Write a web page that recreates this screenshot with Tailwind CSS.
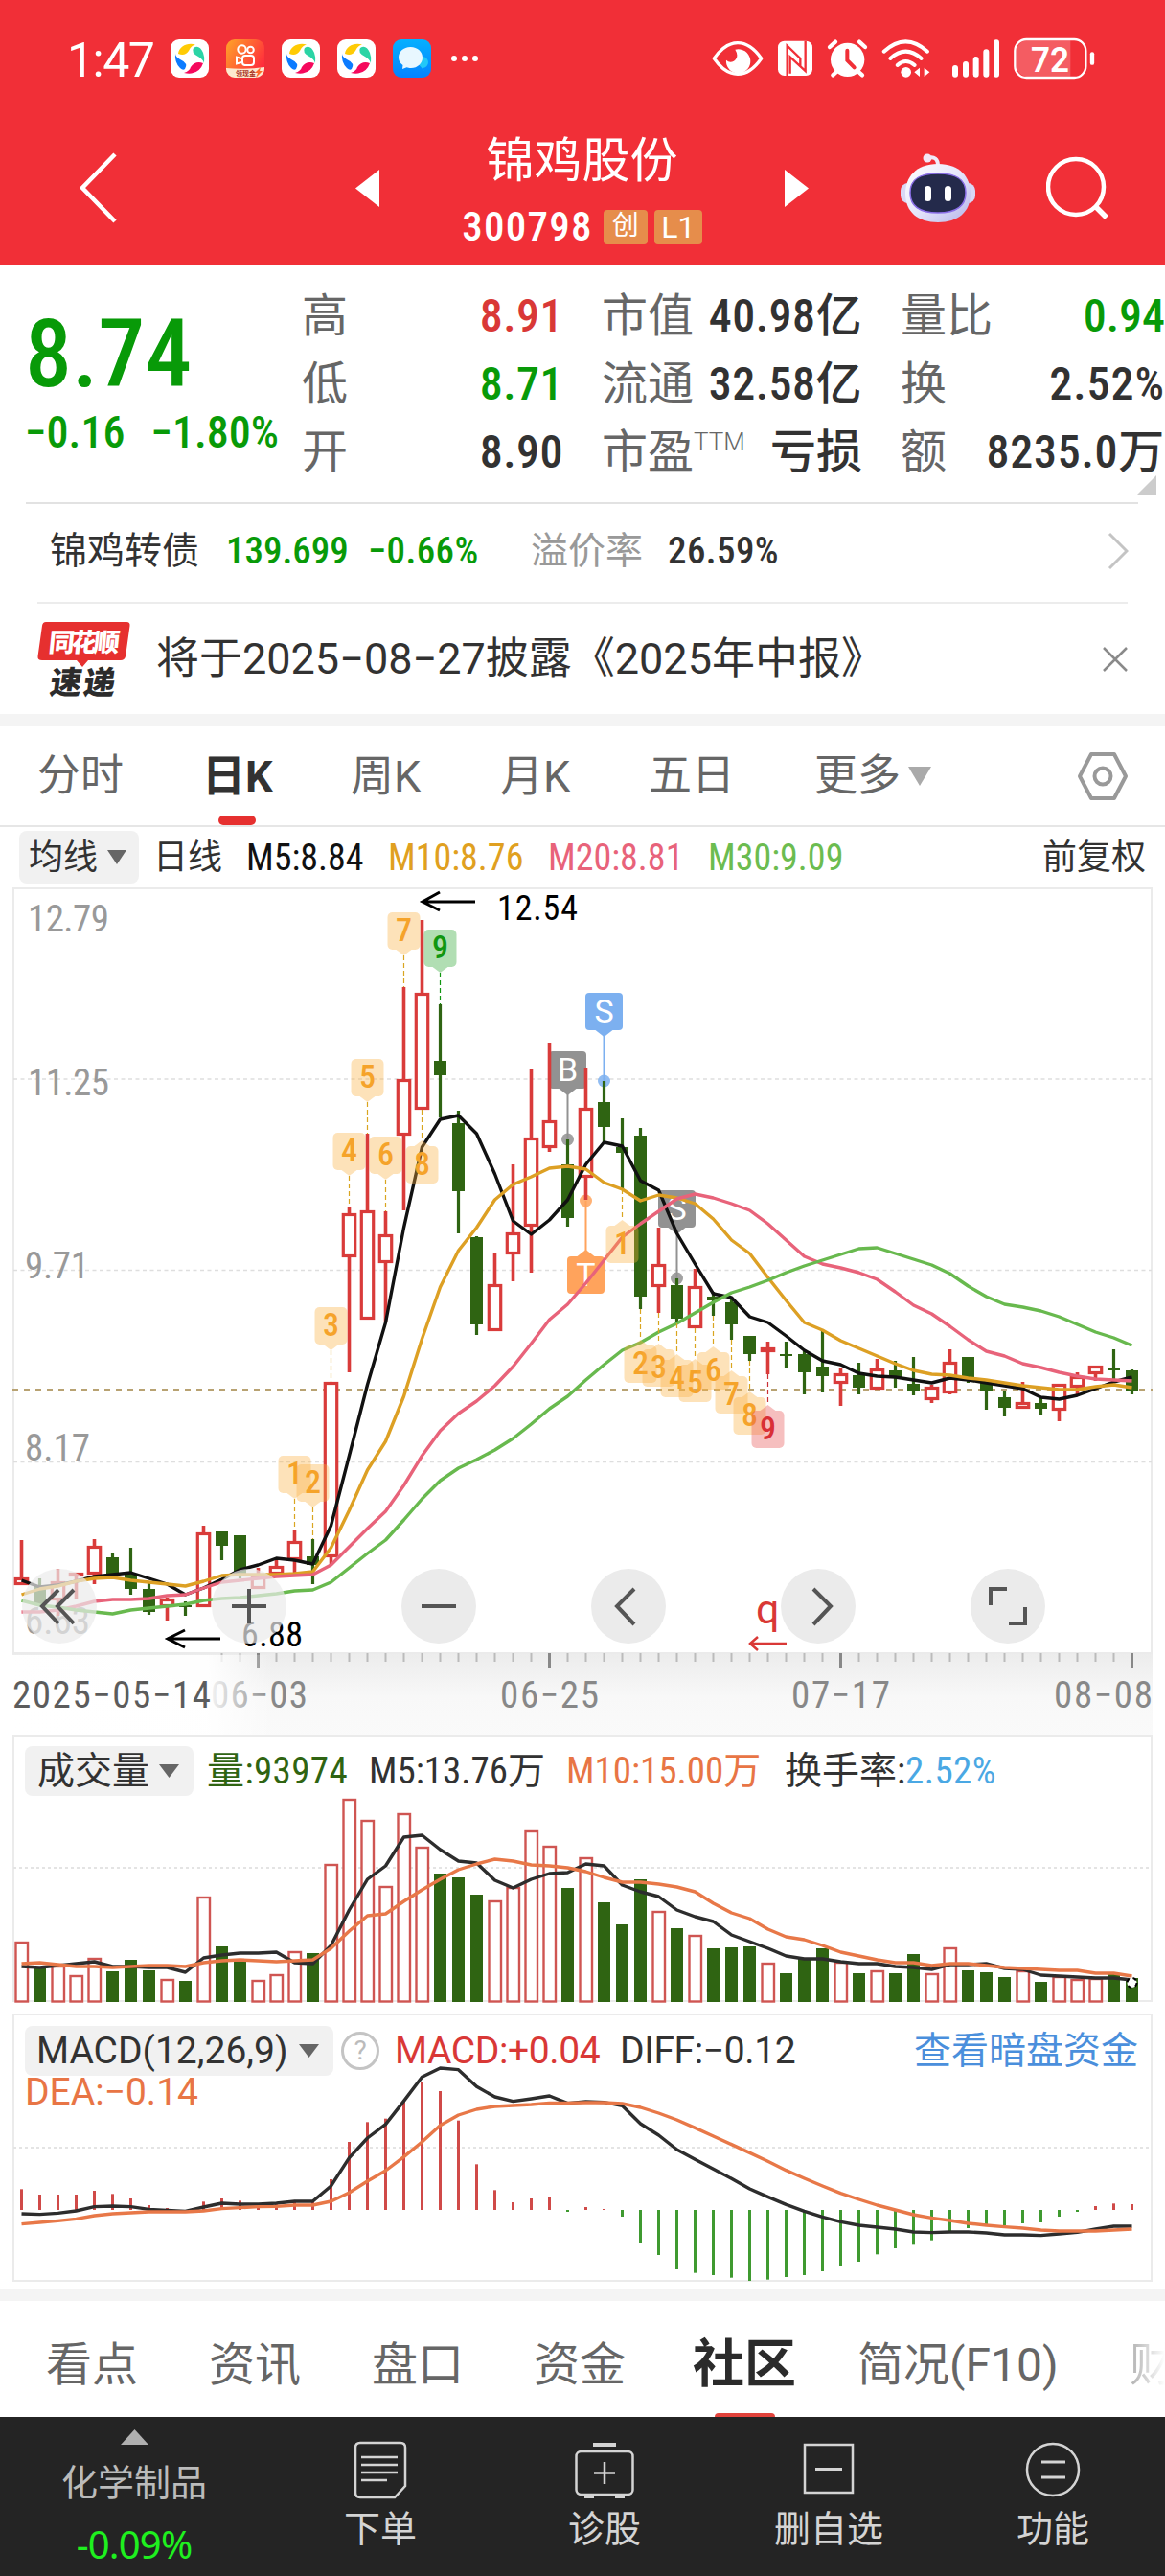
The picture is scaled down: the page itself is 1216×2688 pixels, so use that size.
<!DOCTYPE html>
<html lang="zh">
<head>
    <meta charset="UTF-8">
    <meta name="viewport" content="width=device-width, initial-scale=1.0">
    <title>锦鸡股份 300798</title>
    <script src="https://cdn.jsdelivr.net/npm/@tailwindcss/browser@4"></script>
</head>
<body class="bg-white w-[1216px] overflow-x-hidden font-['Roboto_Condensed','Noto_Sans_CJK_SC',sans-serif] text-[#323232]">

    <!-- 顶部状态栏 + 标题 -->
    <header class="h-[276px] bg-[#f12f37] text-white">
        <div class="h-[122px] flex items-center justify-between">
            <div class="flex items-center gap-[18px] pl-[70px]">
                <span class="w-[90px] pt-1 text-[50px] leading-none font-['Roboto'] tracking-[-0.03em]">1:47</span>
                <svg class="w-10 h-10" viewBox="0 0 40 40"><use href="#app-swirl"/></svg>
                <svg class="w-10 h-10" viewBox="0 0 40 40">
                    <defs><linearGradient id="ks" x1="0" y1="0" x2="1" y2=".6"><stop offset="0" stop-color="#ffa528"/><stop offset="1" stop-color="#ff2d3c"/></linearGradient></defs>
                    <rect width="40" height="40" rx="9" fill="url(#ks)"/>
                    <g fill="none" stroke="#fff" stroke-width="2">
                        <circle cx="16.500" cy="10.500" r="4.200"/><circle cx="25.500" cy="11" r="3.300"/>
                        <rect x="17" y="17" width="12" height="10" rx="3"/><path d="M16 20l-5-1.500v7l5-1.500"/>
                    </g>
                    <path d="M0 30q20 2 40-1v2a9 9 0 0 1-9 9H9a9 9 0 0 1-9-9z" fill="#fde9cf"/>
                    <text x="10" y="37.500" font-size="7" font-weight="700" fill="#a8321e">领现金</text>
                    <path d="M36 29l-6 6h3l-2 5 7-7h-3z" fill="#ff6a28"/>
                </svg>
                <svg class="w-10 h-10" viewBox="0 0 40 40"><use href="#app-swirl"/></svg>
                <svg class="w-10 h-10" viewBox="0 0 40 40"><use href="#app-swirl"/></svg>
                <svg class="w-10 h-10" viewBox="0 0 40 40">
                    <defs>
                        <linearGradient id="msg" x1="0" y1="0" x2="0" y2="1"><stop offset="0" stop-color="#05b0ff"/><stop offset="1" stop-color="#0482ff"/></linearGradient>
                        <g id="app-swirl">
                            <rect width="40" height="40" rx="9" fill="#fff"/>
                            <path d="M8 15C9 7 18 3 26 5.500C23 6 21 8 19 12Q15 18 8 15z" fill="#ffcb05"/>
                            <path d="M24 9Q30 5 34 14Q36 19 35 25Q34 21 29 18Q21 14 24 9z" fill="#2bd4a5"/>
                            <path d="M34 25Q31 34 22 35.500Q18 36 14 35Q20 33 21 29Q26 22 34 25z" fill="#f5095c"/>
                            <path d="M5 15Q5 18 10 21Q19 25 15 31Q13 33 10 30Q4 24 5 15z" fill="#0b7bff"/>
                        </g>
                    </defs>
                    <rect width="40" height="40" rx="9" fill="url(#msg)"/>
                    <path d="M25 24a6 6 0 1 1 6 6l2 3z" fill="#22c8f8"/>
                    <path d="M18.500 8C26 8 31 13 31 19s-5 11-12 11c-2 0-3-.3-4.500-.8L10 31l.5-4C7.500 25 6 22 6 19 6 13 11 8 18.500 8z" fill="#e8f7ff"/>
                </svg>
                <div class="flex gap-[5px] pl-[3px]">
                    <i class="size-1.5 rounded-full bg-white"></i>
                    <i class="size-1.5 rounded-full bg-white"></i>
                    <i class="size-1.5 rounded-full bg-white"></i>
                </div>
            </div>
            <svg class="w-[486px] h-[70px] mt-2" viewBox="0 0 1458 210" fill="none" stroke="#fff" stroke-linecap="round">
                <!-- 护眼 -->
                <path d="M46 93Q80 44 120 44T194 93Q160 142 120 142T46 93z" stroke-width="10" stroke-linejoin="round"/>
                <path d="M112 65A38 38 0 1 1 84 98A20 20 0 0 0 108 101Q126 88 112 65z" fill="#fff" stroke="none"/>
                <!-- NFC -->
                <rect x="246" y="38" width="108" height="109" rx="20" fill="#fff" stroke="none"/>
                <path d="M275 147V53L316 93V118M332 38V132L284 88V140" stroke="#f12f37" stroke-width="7" stroke-linecap="butt"/>
                <!-- 闹钟 -->
                <circle cx="464" cy="97" r="53" fill="#fff" stroke="none"/>
                <path d="M408 57l18-16M519 57l-18-16M418 145l18-16M510 145l-18-16" stroke-width="13"/>
                <path d="M463 68V99L485 121" stroke="#f12f37" stroke-width="12"/>
                <!-- WiFi -->
                <path d="M578 71Q646 9 714 71M598 93Q646 49 695 93M620 114Q646 90 674 114" stroke-width="12"/>
                <circle cx="647" cy="136" r="16" fill="#fff" stroke="none"/>
                <path d="M673 136l17-14v28zM721 136l-17-14v28z" fill="#fff" stroke="none"/>
                <!-- 信号 -->
                <path d="M801 123V143M834 111V143M866 96V143M898 73V143M930 43V143" stroke-width="18"/>
                <!-- 电量 -->
                <path d="M1026 37H1162V149H1026a34 34 0 0 1-34-34V71a34 34 0 0 1 34-34z" fill="#fff" fill-opacity=".22" stroke="none"/>
                <rect x="988" y="33" width="222" height="120" rx="36" stroke-width="7"/>
                <path d="M1230 79V107" stroke-width="13"/>
                <text x="1038" y="134" textLength="120" lengthAdjust="spacingAndGlyphs" font-family="Roboto" font-size="110" font-weight="600" fill="#fff" stroke="none">72</text>
            </svg>
        </div>

        <div class="h-[148px] flex items-center">
            <svg class="ml-[82px] w-10 h-[74px]" viewBox="0 0 40 74" fill="none" stroke="#fff" stroke-width="4.500"><path d="M38 2L4 37L38 72"/></svg>
            <svg class="ml-[249px] w-[25px] h-[39px]" viewBox="0 0 25 39"><path d="M25 0V39L0 19.500z" fill="#fff"/></svg>
            <div class="w-[423px] pt-[9px] flex flex-col items-center">
                <h1 class="h-[70px] leading-[74px] text-[50px]">锦鸡股份</h1>
                <div class="h-[70px] pt-0.5 flex items-center gap-[7px]">
                    <span class="text-[43px] leading-none font-medium tracking-[0.03em] pr-1">300798</span>
                    <span class="w-[46px] h-9 rounded bg-[#e68d4b] text-[28px] leading-[34px] text-center">创</span>
                    <span class="w-[50px] h-9 rounded bg-[#e68d4b] text-[32px] leading-9 text-center font-['Roboto']">L1</span>
                </div>
            </div>
            <svg class="w-[25px] h-[39px]" viewBox="0 0 25 39"><path d="M0 0V39L25 19.500z" fill="#fff"/></svg>
            <!-- 机器人 -->
            <svg class="ml-24 w-[78px] h-[74px]" viewBox="0 0 78 74">
                <defs><linearGradient id="bot" x1="0" y1="0" x2="1" y2="1"><stop offset="0" stop-color="#fff"/><stop offset=".5" stop-color="#e6e6fb"/><stop offset="1" stop-color="#b5b4e8"/></linearGradient></defs>
                <path d="M28 6Q39 3 39 14" fill="none" stroke="#efeafa" stroke-width="4"/>
                <circle cx="28" cy="6" r="4.500" fill="#f3e6f6"/>
                <rect x="0" y="32" width="78" height="21" rx="8" fill="#d9d8f6"/>
                <path d="M39 12C62 12 73 26 73 43C73 62 60 73 39 73S5 62 5 43C5 26 16 12 39 12z" fill="url(#bot)"/>
                <path d="M39 22C60 22 68 29 68 42S60 63 39 63S10 55 10 42S18 22 39 22z" fill="#242a4b" stroke="#8b6fe8" stroke-width="1.500"/>
                <rect x="25" y="35" width="7" height="16" rx="3.500" fill="#fff"/><rect x="46" y="35" width="7" height="16" rx="3.500" fill="#fff"/>
            </svg>
            <svg class="ml-[74px] w-[66px] h-[66px]" viewBox="0 0 66 66" fill="none" stroke="#fff"><circle cx="31" cy="32" r="29" stroke-width="4.500"/><path d="M51 52L63 64" stroke-width="5.500"/></svg>
        </div>
    </header>

    <!-- 行情 -->
    <section class="h-[248px] flex">
        <div class="w-[315px] pl-[26px] text-[#089a08]">
            <div class="mt-[41px] h-[104px] leading-[106px] text-[98px] font-medium">8.74</div>
            <div class="h-[60px] leading-[60px] text-[46px] flex gap-[27px] font-medium"><span>−0.16</span><span>−1.80%</span></div>
        </div>
        <dl class="w-[273px] pt-[18px] text-[48px] leading-[71px]">
            <div class="h-[71px] flex justify-between"><dt class="text-[#666]">高</dt><dd class="font-medium tracking-[0.01em] text-[#d93836]">8.91</dd></div>
            <div class="h-[71px] flex justify-between"><dt class="text-[#666]">低</dt><dd class="font-medium tracking-[0.01em] text-[#089a08]">8.71</dd></div>
            <div class="h-[71px] flex justify-between"><dt class="text-[#666]">开</dt><dd class="font-medium tracking-[0.01em]">8.90</dd></div>
        </dl>
        <dl class="ml-10 w-[272px] pt-[18px] text-[48px] leading-[71px]">
            <div class="h-[71px] flex justify-between"><dt class="text-[#666]">市值</dt><dd class="font-medium tracking-[0.01em]">40.98亿</dd></div>
            <div class="h-[71px] flex justify-between"><dt class="text-[#666]">流通</dt><dd class="font-medium tracking-[0.01em]">32.58亿</dd></div>
            <div class="h-[71px] flex justify-between"><dt class="text-[#666] flex">市盈<small class="text-[26px] leading-[50px] font-['Roboto'] font-light">TTM</small></dt><dd class="font-medium">亏损</dd></div>
        </dl>
        <dl class="ml-10 w-[276px] pt-[18px] text-[48px] leading-[71px]">
            <div class="h-[71px] flex justify-between"><dt class="text-[#666]">量比</dt><dd class="font-medium text-[#089a08]">0.94</dd></div>
            <div class="h-[71px] flex justify-between"><dt class="text-[#666]">换</dt><dd class="font-medium tracking-[0.02em]">2.52%</dd></div>
            <div class="h-[71px] flex justify-between"><dt class="text-[#666]">额</dt><dd class="font-medium tracking-[0.015em]">8235.0万</dd></div>
            <svg class="ml-auto mr-[9px] -mt-[11px] w-5 h-5" viewBox="0 0 20 20"><path d="M20 0V20H0z" fill="#ccc"/></svg>
        </dl>
    </section>

    <!-- 可转债 -->
    <div class="ml-[27px] mr-[28px] border-t-2 border-[#e2e2e2] h-[104px] flex items-center pl-[25px] pr-[10px] pb-1 text-[39px] whitespace-nowrap">
        <span class="w-[184px]">锦鸡转债</span>
        <span class="w-[148px] text-[#089a08] font-medium">139.699</span>
        <span class="w-[170px] text-[#089a08] font-medium tracking-[0.01em]">−0.66%</span>
        <span class="w-[143px] text-[#999]">溢价率</span>
        <span class="font-medium tracking-[0.01em]">26.59%</span>
        <svg class="ml-auto w-[22px] h-10" viewBox="0 0 22 40" fill="none" stroke="#c4c4c4" stroke-width="3"><path d="M2 2L20 20L2 38"/></svg>
    </div>

    <!-- 速递 -->
    <div class="mx-[39px] border-t-2 border-[#ececec] h-[117px] flex items-center">
        <div class="w-[124px]">
            <svg class="w-[98px] h-[78px] overflow-visible" viewBox="0 0 98 78" font-weight="900" font-family="'Noto Sans CJK SC',sans-serif">
                <path d="M9 0H93q4 0 3.500 4L92 36q-1 4-5 4H53l-6 7-6-7H5q-5 0-4.500-4L5 4q.5-4 4-4z" fill="#e6302f"/>
                <text transform="translate(11 31) skewX(-6)" font-size="27" textLength="74" fill="#fff">同花顺</text>
                <text transform="translate(12 75) skewX(-8)" font-size="33" textLength="68" fill="#2c2c2c">速递</text>
            </svg>
        </div>
        <p class="text-[45px] font-['Roboto','Noto_Sans_CJK_SC'] whitespace-nowrap">将于2025−08−27披露《2025年中报》</p>
        <svg class="ml-auto w-[26px] h-[26px]" viewBox="0 0 26 26" stroke="#8a8a8a" stroke-width="2.500"><path d="M1 1L25 25M25 1L1 25"/></svg>
    </div>
    <div class="h-[13px] bg-[#f4f4f4]"></div>

    <!-- 周期切换 -->
    <nav class="h-[105px] border-b-2 border-[#e6e6e6] flex items-center text-[45px] text-[#666] font-['Roboto','Noto_Sans_CJK_SC'] whitespace-nowrap">
        <span class="ml-[39px] w-[172px]">分时</span>
        <span class="relative w-[155px] pt-0.5 font-bold text-[#323232]">日K<i class="absolute left-[17px] top-[76px] w-[39px] h-[10px] rounded-full bg-[#e6302f]"></i></span>
        <span class="w-[156px] pt-0.5">周K</span>
        <span class="w-[155px] pt-0.5">月K</span>
        <span class="w-[173px]">五日</span>
        <span>更多</span>
        <svg class="ml-2 w-6 h-5" viewBox="0 0 24 20"><path d="M0 0H24L12 20z" fill="#aaa"/></svg>
        <svg class="ml-auto mr-[38px] w-[54px] h-[52px]" viewBox="0 0 54 52" fill="none" stroke="#999" stroke-width="4" stroke-linejoin="round"><path d="M15 3H39L51 26L39 49H15L3 26z"/><circle cx="27" cy="26" r="8.500"/></svg>
    </nav>

    <!-- 均线 -->
    <div class="h-[63px] flex items-center text-[38px] whitespace-nowrap">
        <div class="ml-5 w-[125px] h-[55px] rounded-lg bg-[#f1f1f1] flex items-center pl-[10px] text-[36px]">均线<svg class="ml-[10px] w-5 h-[15px]" viewBox="0 0 20 15"><path d="M0 0H20L10 15z" fill="#666"/></svg></div>
        <span class="ml-[15px] w-[97px] text-[36px]">日线</span>
        <span class="w-[148px] pt-0.5 text-[#111]">M5:8.84</span>
        <span class="w-[167px] pt-0.5 text-[#e0a020]">M10:8.76</span>
        <span class="w-[167px] pt-0.5 text-[#e8637a]">M20:8.81</span>
        <span class="pt-0.5 text-[#6cbc50]">M30:9.09</span>
        <span class="ml-auto mr-5 text-[36px]">前复权</span>
    </div>

    <!-- K线图 -->
    <div class="relative h-[884px]">
        <svg id="kline" class="block w-full h-full" viewBox="0 926 1216 884"></svg>
        <div class="absolute left-[23px] top-[711px] flex gap-[120px]">
            <button class="size-[78px] rounded-full bg-[#ebebeb]/70"><svg viewBox="0 0 78 78" fill="none" stroke="#555" stroke-width="4"><path d="M38 22L21 39L38 57M54 22L37 39L54 57"/></svg></button>
            <button class="size-[78px] rounded-full bg-[#ebebeb]/70"><svg viewBox="0 0 78 78" fill="none" stroke="#555" stroke-width="4"><path d="M21 39H57M39 21V57"/></svg></button>
            <button class="size-[78px] rounded-full bg-[#ebebeb]"><svg viewBox="0 0 78 78" fill="none" stroke="#555" stroke-width="4"><path d="M21 39H57"/></svg></button>
            <button class="size-[78px] rounded-full bg-[#ebebeb]"><svg viewBox="0 0 78 78" fill="none" stroke="#555" stroke-width="4"><path d="M45 21L27 39L45 58"/></svg></button>
            <button class="size-[78px] rounded-full bg-[#ebebeb]"><svg viewBox="0 0 78 78" fill="none" stroke="#555" stroke-width="4"><path d="M34 21L52 39L34 58"/></svg></button>
            <button class="size-[78px] rounded-full bg-[#ebebeb]"><svg viewBox="0 0 78 78" fill="none" stroke="#555" stroke-width="4"><path d="M21 38V21H38M57 40V57H40"/></svg></button>
        </div>
    </div>

    <!-- 成交量 -->
    <div class="relative h-[292px]">
        <svg id="volume" class="block w-full h-full" viewBox="0 1810 1216 292"></svg>
        <div class="absolute inset-x-0 top-3 h-[52px] flex items-center text-[39px] whitespace-nowrap">
            <div class="ml-[26px] w-[176px] h-[52px] rounded-lg bg-[#f1f1f1] flex items-center pl-[13px]">成交量<svg class="ml-[10px] w-[21px] h-[14px]" viewBox="0 0 21 14"><path d="M0 0H21L10.500 14z" fill="#666"/></svg></div>
            <span class="ml-[14px] w-[169px] tracking-[0.01em] text-[#2f6412]">量:93974</span>
            <span class="w-[206px]">M5:13.76万</span>
            <span class="w-[228px] text-[#e87545]">M10:15.00万</span>
            <span>换手率:</span>
            <span class="tracking-[0.01em] text-[#4aa8e4]">2.52%</span>
        </div>
    </div>

    <!-- MACD -->
    <div class="relative h-[286px]">
        <svg id="macd" class="block w-full h-full" viewBox="0 2102 1216 286"></svg>
        <div class="absolute inset-x-0 top-3 h-[52px] flex items-center text-[39px] font-['Roboto','Noto_Sans_CJK_SC'] whitespace-nowrap">
            <div class="ml-[26px] w-[322px] h-[52px] rounded-lg bg-[#f1f1f1] flex items-center pl-[12px]">MACD(12,26,9)<svg class="ml-auto mr-[15px] w-[21px] h-[14px]" viewBox="0 0 21 14"><path d="M0 0H21L10.500 14z" fill="#666"/></svg></div>
            <span class="ml-2 size-10 rounded-full border-[3px] border-[#c4c4c4] text-[#bbb] text-[28px] leading-[34px] text-center">?</span>
            <span class="ml-[16px] w-[235px] tracking-[-0.01em] text-[#d93836]">MACD:+0.04</span>
            <span class="tracking-[-0.01em]">DIFF:−0.12</span>
            <a class="ml-auto mr-[28px] text-[#4a8fdc]">查看暗盘资金</a>
        </div>
        <div class="absolute left-[26px] top-[61px] leading-[40px] text-[39px] font-['Roboto'] text-[#e87545]">DEA:−0.14</div>
    </div>
    <div class="h-[13px] bg-[#f4f4f4]"></div>

    <!-- 内容标签 -->
    <nav class="relative h-[121px] flex items-center text-[48px] text-[#666] pt-3 font-['Roboto','Noto_Sans_CJK_SC'] whitespace-nowrap overflow-hidden">
        <span class="ml-[48px] w-[170px]">看点</span>
        <span class="w-[170px]">资讯</span>
        <span class="w-[169px]">盘口</span>
        <span class="w-[166px]">资金</span>
        <span class="w-[172px] text-[54px] font-bold text-[#2b2b2b]">社区</span>
        <span class="w-[284px]">简况(F10)</span>
        <span class="w-[37px] overflow-hidden bg-gradient-to-r from-[#b0b0b0] to-white bg-clip-text text-transparent">财</span>
        <i class="absolute left-[746px] bottom-0 w-[63px] h-1 rounded-t bg-[#e2433c]"></i>
    </nav>

    <!-- 底部导航 -->
    <footer class="h-[166px] bg-[#242424] text-[#d4d4d4] text-[38px] flex">
        <div class="w-[280px] pt-[13px] flex flex-col items-center text-[#bbb]">
            <svg class="w-[29px] h-4" viewBox="0 0 29 16"><path d="M14.500 0L29 16H0z" fill="#b0b0b0"/></svg>
            <span class="mt-[12px] leading-[56px]">化学制品</span>
            <span class="mt-[9px] leading-[54px] text-[40px] text-[#1ff01f] font-['Noto_Sans'] tracking-[-0.02em]">-0.09%</span>
        </div>
        <div class="w-[234px] pt-6 flex flex-col items-center">
            <svg class="w-[62px] h-[62px]" viewBox="0 0 62 62" fill="none" stroke="#d4d4d4" stroke-width="2.500"><path d="M10 3H52q5 0 5 5V48L46 60H10q-5 0-5-5V8q0-5 5-5z"/><path d="M11 18H49M11 26H49M11 34H49M11 42H38"/></svg>
            <span class="mt-[3px] leading-[56px]">下单</span>
        </div>
        <div class="w-[234px] pt-6 flex flex-col items-center">
            <svg class="w-[62px] h-[62px]" viewBox="0 0 62 62" fill="none" stroke="#d4d4d4" stroke-width="2.500"><rect x="1.500" y="12" width="59" height="45" rx="5"/><path d="M19 5H43" stroke-width="4"/><path d="M31 23V46M20 34.500H42"/><path d="M10 59H20M42 59H52" stroke-width="4"/></svg>
            <span class="mt-[3px] leading-[56px]">诊股</span>
        </div>
        <div class="w-[234px] pt-6 flex flex-col items-center">
            <svg class="w-[62px] h-[62px]" viewBox="0 0 62 62" fill="none" stroke="#d4d4d4" stroke-width="2.500"><rect x="6" y="5" width="50" height="50"/><path d="M17 30.500H45" stroke-width="3"/></svg>
            <span class="mt-[3px] leading-[56px]">删自选</span>
        </div>
        <div class="w-[234px] pt-6 flex flex-col items-center">
            <svg class="w-[62px] h-[62px]" viewBox="0 0 62 62" fill="none" stroke="#d4d4d4" stroke-width="2.500"><circle cx="31" cy="31" r="27"/><path d="M19 23H44M19 39H44" stroke-width="3"/></svg>
            <span class="mt-[3px] leading-[56px]">功能</span>
        </div>
    </footer>

    <script>
        const RED = '#d93b3a', GREEN = '#2f6412', ORANGE = '#e87848';
        const X = i => 22.5 + i * 19;

        // 每根K线：涨跌(1红/0绿), 最高, 实体上沿, 实体下沿, 最低
        const candles = [
            [1,1607,1646,1654,1654],[0,1647,1654,1674,1674],[1,1637,1650,1670,1686],[1,1641,1641,1644,1669],[1,1606,1613,1643,1653],
            [0,1620,1625,1642,1642],[0,1615,1643,1658,1664],[0,1652,1658,1682,1685],[1,1667,1668,1677,1691],[0,1671,1675,1677,1686],
            [1,1592,1599,1677,1677],[0,1598,1598,1613,1628],[0,1602,1602,1645,1647],[1,1636,1643,1658,1658],[1,1628,1634,1643,1644],
            [1,1597,1608,1628,1642],[0,1606,1624,1633,1653],[1,1442,1442,1625,1633],[1,1260,1266,1312,1432],[1,1183,1263,1377,1377],
            [1,1264,1288,1318,1380],[1,1030,1126,1185,1263],[1,960,1036,1158,1158],[0,1048,1107,1122,1166],[0,1159,1172,1243,1287],
            [0,1290,1291,1382,1393],[1,1308,1340,1389,1389],[1,1215,1286,1309,1337],[1,1116,1187,1280,1328],[1,1088,1169,1198,1202],
            [0,1189,1215,1271,1280],[1,1114,1156,1229,1252],[0,1128,1150,1176,1192],[0,1167,1197,1203,1241],[0,1177,1185,1353,1366],
            [1,1281,1319,1343,1370],[0,1334,1341,1376,1381],[1,1324,1342,1386,1386],[0,1348,1353,1357,1373],[0,1353,1359,1382,1398],
            [0,1394,1394,1413,1420],[1,1400,1406,1411,1434],[0,1400,1413,1415,1427],[0,1410,1413,1432,1455],[0,1388,1426,1436,1453],
            [1,1427,1433,1444,1467],[0,1422,1435,1448,1455],[1,1418,1428,1450,1450],[0,1420,1430,1437,1448],[0,1416,1444,1452,1456],
            [1,1445,1447,1461,1464],[1,1408,1421,1454,1455],[0,1416,1416,1438,1443],[0,1443,1443,1452,1471],[0,1451,1458,1469,1478],
            [1,1442,1463,1470,1470],[0,1458,1464,1470,1477],[1,1444,1444,1472,1483],[1,1432,1436,1448,1455],[1,1425,1425,1434,1441],
            [0,1408,1428,1430,1439],[0,1429,1430,1451,1455]
        ];
        const ma5 = [1649,1656,1654,1650,1645,1643,1641,1647,1653,1664,1657,1648,1638,1633,1626,1628,1632,1592,1519,1445,1380,1281,1197,1168,1164,1183,1225,1274,1288,1273,1252,1215,1192,1196,1232,1242,1287,1319,1350,1354,1374,1380,1394,1409,1420,1424,1433,1436,1437,1440,1443,1438,1440,1443,1446,1449,1458,1460,1456,1449,1442,1437];
        const ma10 = [1664,1658,1655,1650,1647,1646,1649,1651,1653,1655,1650,1644,1643,1643,1643,1642,1640,1615,1576,1534,1504,1457,1397,1343,1305,1281,1252,1236,1228,1219,1217,1220,1234,1241,1253,1247,1250,1256,1272,1294,1308,1333,1357,1380,1388,1399,1407,1415,1423,1430,1434,1435,1438,1440,1443,1446,1448,1450,1450,1447,1445,1448];
        const ma20 = [1682,1682,1680,1676,1671,1669,1669,1668,1665,1664,1657,1651,1649,1647,1645,1644,1643,1633,1614,1595,1577,1550,1519,1493,1475,1462,1446,1426,1402,1377,1361,1339,1315,1291,1277,1264,1251,1246,1250,1256,1263,1277,1294,1311,1319,1323,1328,1335,1348,1362,1371,1384,1398,1410,1415,1423,1427,1432,1436,1439,1440,1441];
        const ma30 = [1670,1675,1677,1680,1682,1684,1680,1678,1676,1674,1670,1668,1667,1665,1663,1660,1659,1651,1636,1621,1607,1586,1564,1545,1532,1523,1513,1501,1486,1470,1457,1440,1424,1409,1401,1390,1381,1370,1359,1349,1343,1336,1328,1321,1315,1309,1303,1302,1308,1314,1320,1329,1342,1353,1361,1364,1368,1374,1382,1390,1396,1404];

        const line = (data, color, width = 3.4) =>
            `<polyline fill="none" stroke="${color}" stroke-width="${width}" stroke-linejoin="round" points="${data.map((y, i) => X(i) + ',' + y).join(' ')}"/>`;
        const text = (x, y, w, size, color, s, extra = '') =>
            `<text x="${x}" y="${y}" textLength="${w}" font-size="${size}" fill="${color}" ${extra}>${s}</text>`;

        // 九转序列标记：up 为 true 时在K线上方
        function flag(i, label, up, bg = '#fbb040', fg = '#f5a32a', dash = '#d9a520') {
            const x = X(i), c = candles[i];
            const top = up ? c[1] - 78 : c[4] + 38;
            const tip = up ? `M${x - 8} ${top + 39}l8 6 8-6z` : `M${x - 8} ${top}l8-6 8 6z`;
            const y1 = up ? top + 45 : c[4], y2 = up ? c[1] : top - 6;
            return `<path d="M${x} ${y1}V${y2}" stroke="${dash}" stroke-width="1.2" stroke-dasharray="5 3"/>
                <g fill="${bg}" opacity=".36"><rect x="${x - 17}" y="${top}" width="34" height="39" rx="5"/><path d="${tip}"/></g>
                <text x="${x}" y="${top + 30}" text-anchor="middle" font-size="34" font-weight="500" fill="${fg}">${label}</text>`;
        }

        // 买卖点标记
        function mark(i, label, up, color) {
            const x = X(i), c = candles[i];
            const top = up ? c[1] - 92 : c[4] + 59;
            const dot = up ? c[1] : c[4] + 1;
            const tip = up ? `M${x - 9} ${top + 39}l9 7 9-7z` : `M${x - 9} ${top}l9-7 9 7z`;
            return `<path d="M${x} ${up ? top + 45 : top - 6}V${dot}" stroke="${color}" stroke-width="2"/>
                <circle cx="${x}" cy="${dot}" r="6.5" fill="${color}" opacity=".85"/>
                <rect x="${x - 19.5}" y="${top}" width="39" height="39" rx="4" fill="${color}"/><path d="${tip}" fill="${color}"/>
                <text x="${x}" y="${top + 31}" text-anchor="middle" font-family="Roboto" font-size="34" fill="#fff">${label}</text>`;
        }

        function drawKline() {
            let s = `<defs>
                <linearGradient id="axisV" x1="0" y1="0" x2="0" y2="1"><stop offset="0" stop-color="#ececec"/><stop offset=".5" stop-color="#f8f8f8"/><stop offset="1" stop-color="#fafafa"/></linearGradient>
                <linearGradient id="fade" x1="0" y1="0" x2="1" y2="0"><stop offset="0" stop-color="#fff"/><stop offset=".72" stop-color="#fff" stop-opacity=".95"/><stop offset=".95" stop-color="#fff" stop-opacity="0"/></linearGradient>
                </defs>
                <rect x="13" y="1725" width="1190" height="91" fill="url(#axisV)"/>
                <rect x="14" y="927" width="1188" height="798" fill="#fff" stroke="#ebebeb" stroke-width="2"/>`;
            for (const y of [1126, 1325.5, 1525.5]) s += `<path d="M14 ${y}H1202" stroke="#dedede" stroke-width="1.3" stroke-dasharray="4 3.500"/>`;
            s += text(29, 972, 85, 39, '#999', '12.79') + text(29, 1143, 85, 39, '#999', '11.25') + text(26, 1334, 67, 39, '#999', '9.71')
               + text(26, 1524, 68, 39, '#999', '8.17') + text(26, 1705, 68, 39, '#999', '6.63');
            s += '<path d="M13 1450H1203" stroke="#b8a272" stroke-width="2" stroke-dasharray="6 6"/>';
            s += mark(30, 'B', true, '#929292') + mark(32, 'S', true, '#7cb0f0') + mark(36, 'S', true, '#929292') + mark(31, 'T', false, '#ffa35c');

            candles.forEach(([red, hi, top, bot, lo], i) => {
                const x = X(i);
                if (red) {
                    s += `<path d="M${x} ${hi}V${top}M${x} ${bot}V${lo}" stroke="${RED}" stroke-width="3.6"/>
                        <rect x="${x - 6.2}" y="${top + 1.5}" width="12.4" height="${Math.max(bot - top - 3, 1)}" fill="#fff" stroke="${RED}" stroke-width="3.2"/>`;
                } else {
                    s += `<path d="M${x} ${hi}V${lo}" stroke="${GREEN}" stroke-width="3.2"/><rect x="${x - 6.5}" y="${top}" width="13" height="${bot - top}" fill="${GREEN}"/>`;
                }
            });

            s += line(ma5, '#111') + line(ma10, '#dda024') + line(ma20, '#e8637a') + line(ma30, '#68b94e');
            [1, 2, 3, 4, 5, 6, 7].forEach(n => s += flag(14 + n, n, true));
            s += flag(22, 8, false) + flag(23, 9, true, '#2ba52f', '#109610', '#109610');
            [1, 2, 3, 4, 5, 6, 7, 8].forEach(n => s += flag(32 + n, n, false));
            s += flag(41, 9, false, '#e8504f', '#d93036', '#c93036');

            // 最高 / 最低价
            s += '<path d="M496 941H441M459 931L441 941L459 950M230 1710H175M193 1701L175 1710L193 1719" fill="none" stroke="#000" stroke-width="3"/>';
            s += text(519, 960, 84, 36, '#000', '12.54') + text(252, 1718, 64, 36, '#000', '6.88');
            s += text(789, 1694, 24, 43, '#d93836', 'q', 'font-family="Roboto"') + '<path d="M821 1715H783M791 1708L783 1715L791 1722" fill="none" stroke="#d93836" stroke-width="2.500"/>';

            // 时间轴
            for (let i = 11; i < 62; i++) {
                const major = (i - 13) % 16 === 0;
                s += `<path d="M${X(i)} 1725V${major ? 1740 : 1734}" stroke="${major ? '#888' : '#bbb'}" stroke-width="${major ? 3 : 2}"/>`;
            }
            s += text(220, 1782, 101, 39, '#888', '06−03') + text(522, 1782, 103, 39, '#888', '06−25') + text(826, 1782, 103, 39, '#888', '07−17') + text(1100, 1782, 103, 39, '#888', '08−08');
            s += '<rect x="0" y="1727" width="300" height="86" fill="url(#fade)"/>';
            s += text(13, 1782, 207, 39, '#5c5c5c', '2025−05−14');
            document.getElementById('kline').innerHTML = s;
        }

        const volTop = [2027,2053,2052,2062,2044,2058,2046,2057,2066,2068,1980,2032,2047,2067,2061,2037,2039,1946,1878,1900,1969,1893,1928,1956,1960,1978,1984,1970,1911,1927,1971,1939,1986,2009,1962,1995,2013,2020,2034,2033,2032,2049,2060,2044,2034,2048,2060,2057,2060,2040,2060,2033,2057,2059,2064,2057,2069,2063,2066,2065,2060,2065];
        const vol5 = [2052,2053,2051,2049,2047,2052,2052,2053,2053,2058,2043,2040,2038,2038,2037,2048,2049,2030,1993,1961,1947,1917,1915,1930,1942,1944,1962,1970,1961,1955,1954,1945,1947,1967,1974,1979,1993,2000,2005,2019,2026,2033,2041,2044,2044,2047,2049,2049,2052,2053,2055,2050,2050,2049,2054,2055,2061,2062,2063,2064,2064,2066];
        const vol10 = [2049,2048,2050,2052,2052,2053,2052,2051,2051,2052,2048,2046,2045,2046,2047,2046,2045,2033,2015,1999,1997,1984,1972,1961,1951,1945,1940,1942,1946,1947,1949,1953,1959,1964,1964,1966,1969,1974,1986,1996,2002,2013,2021,2024,2030,2037,2041,2045,2048,2048,2051,2049,2049,2051,2053,2054,2055,2056,2056,2059,2059,2062];

        function drawVolume() {
            let s = '<rect x="14" y="1811" width="1188" height="277" fill="#fff" stroke="#ebebeb" stroke-width="2"/><path d="M14 1949H1202" stroke="#e4e4e4" stroke-width="2" stroke-dasharray="3 3"/>';
            volTop.forEach((y, i) => {
                const x = X(i);
                s += candles[i][0]
                    ? `<rect x="${x - 6}" y="${y}" width="12.5" height="${2088.5 - y}" fill="#fff" stroke="#cf5552" stroke-width="2.400"/>`
                    : `<rect x="${x - 6.5}" y="${y - 1}" width="13" height="${2090 - y}" fill="${GREEN}"/>`;
            });
            s += line(vol5, '#2d2d2d') + line(vol10, ORANGE);
            s += '<circle cx="1181.500" cy="2069" r="5" fill="#fff" stroke="#000" stroke-width="2" stroke-dasharray="4 4"/>';
            document.getElementById('volume').innerHTML = s;
        }

        // MACD 数值以 1/3 像素为单位，0轴为 618
        const zero = 618;
        const bars = [553,570,570,570,558,568,582,603,612,618,592,582,589,600,600,592,592,522,405,343,332,275,219,246,338,475,556,594,582,576,624,609,615,639,720,759,804,815,822,830,840,836,828,822,810,795,780,757,738,727,713,690,675,668,666,660,657,639,624,606,598,600];
        const diff = [630,632,628,621,608,606,608,616,619,622,609,597,600,600,597,591,591,543,455,393,350,277,202,174,179,232,264,278,270,261,284,279,281,292,348,384,429,460,490,520,552,577,601,622,640,655,666,672,678,687,689,687,687,690,696,696,698,693,688,678,669,669];
        const dea = [662,657,652,646,636,630,627,624,624,624,621,614,611,608,607,603,603,591,564,528,495,452,405,353,321,303,294,291,288,283,283,282,282,285,297,315,336,361,387,413,439,466,494,519,543,566,585,603,618,633,643,651,660,666,671,675,681,684,684,684,681,678];

        function drawMacd() {
            const Y = v => 2100 + v / 3;
            let s = '<rect x="14" y="2102" width="1188" height="278" fill="#fff" stroke="#ebebeb" stroke-width="2"/><path d="M14 2241H1202" stroke="#e4e4e4" stroke-width="2" stroke-dasharray="3 3"/>';
            bars.forEach((v, i) => s += `<path d="M${X(i)} ${Y(zero)}V${Y(v)}" stroke="${v < zero ? '#d04a48' : '#3f9a30'}" stroke-width="3"/>`);
            s += line(diff.map(Y), '#2d2d2d') + line(dea.map(Y), ORANGE);
            document.getElementById('macd').innerHTML = s;
        }

        drawKline();
        drawVolume();
        drawMacd();
    </script>
</body>
</html>
